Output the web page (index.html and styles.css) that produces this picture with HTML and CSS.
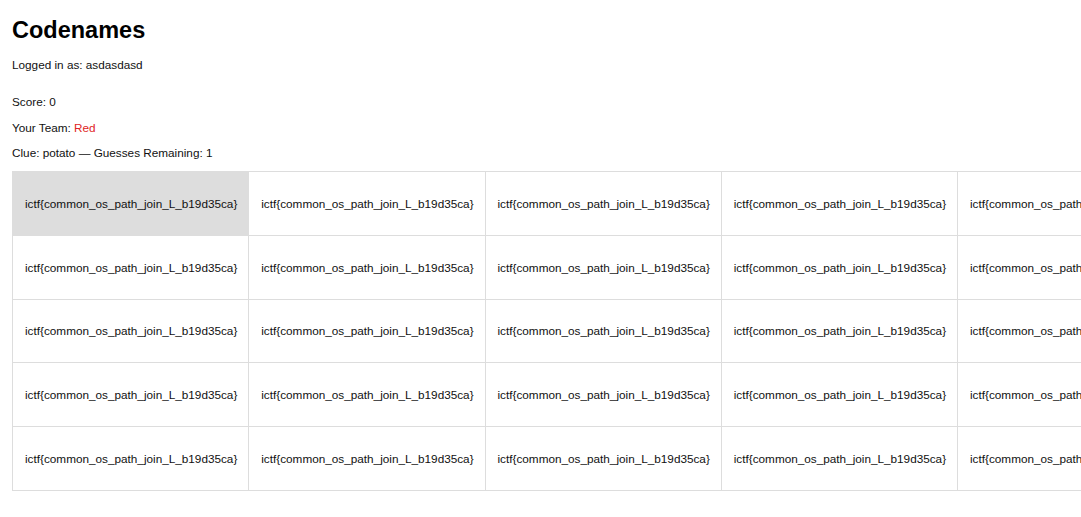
FILE: index.html
```html
<!DOCTYPE html>
<html>
<head>
<meta charset="utf-8">
<title>Codenames</title>
<link rel="stylesheet" href="styles.css">
</head>
<body>
<div class="page">
  <h1 class="title">Codenames</h1>
  <p class="login">Logged in as: asdasdasd</p>
  <div class="status">
    <p class="line">Score: 0</p>
    <p class="line">Your Team: <span class="team-red">Red</span></p>
    <p class="line">Clue: potato — Guesses Remaining: 1</p>
  </div>
  <div class="board">
    <div class="card selected">ictf{common_os_path_join_L_b19d35ca}</div>
    <div class="card">ictf{common_os_path_join_L_b19d35ca}</div>
    <div class="card">ictf{common_os_path_join_L_b19d35ca}</div>
    <div class="card">ictf{common_os_path_join_L_b19d35ca}</div>
    <div class="card">ictf{common_os_path_join_L_b19d35ca}</div>
    <div class="card">ictf{common_os_path_join_L_b19d35ca}</div>
    <div class="card">ictf{common_os_path_join_L_b19d35ca}</div>
    <div class="card">ictf{common_os_path_join_L_b19d35ca}</div>
    <div class="card">ictf{common_os_path_join_L_b19d35ca}</div>
    <div class="card">ictf{common_os_path_join_L_b19d35ca}</div>
    <div class="card">ictf{common_os_path_join_L_b19d35ca}</div>
    <div class="card">ictf{common_os_path_join_L_b19d35ca}</div>
    <div class="card">ictf{common_os_path_join_L_b19d35ca}</div>
    <div class="card">ictf{common_os_path_join_L_b19d35ca}</div>
    <div class="card">ictf{common_os_path_join_L_b19d35ca}</div>
    <div class="card">ictf{common_os_path_join_L_b19d35ca}</div>
    <div class="card">ictf{common_os_path_join_L_b19d35ca}</div>
    <div class="card">ictf{common_os_path_join_L_b19d35ca}</div>
    <div class="card">ictf{common_os_path_join_L_b19d35ca}</div>
    <div class="card">ictf{common_os_path_join_L_b19d35ca}</div>
    <div class="card">ictf{common_os_path_join_L_b19d35ca}</div>
    <div class="card">ictf{common_os_path_join_L_b19d35ca}</div>
    <div class="card">ictf{common_os_path_join_L_b19d35ca}</div>
    <div class="card">ictf{common_os_path_join_L_b19d35ca}</div>
    <div class="card">ictf{common_os_path_join_L_b19d35ca}</div>
  </div>
</div>
</body>
</html>
```
FILE: styles.css
```css
html, body {
  margin: 0;
  padding: 0;
  overflow: hidden;
  background: #fff;
}
.page {
  padding: 16px 12px 12px 12px;
  font-family: "Liberation Sans", Arial, sans-serif;
  font-size: 11.75px;
  color: #111;
}
.title {
  font-size: 23.5px;
  font-weight: bold;
  margin: 0;
  line-height: 28px;
  color: #000;
}
.login {
  margin: 14px 0 0 0;
  line-height: 14px;
}
.status {
  margin-top: 23px;
  display: flex;
  flex-direction: column;
  gap: 11.5px;
}
.line {
  margin: 0;
  line-height: 14px;
}
.team-red {
  color: #e02424;
}
.board {
  margin-top: 11px;
  display: grid;
  grid-template-columns: repeat(5, 236.25px);
  width: max-content;
  border-top: 1px solid #dddddd;
  border-left: 1px solid #dddddd;
}
.card {
  box-sizing: border-box;
  height: 63.8px;
  display: flex;
  align-items: center;
  padding: 0 12px;
  border-right: 1px solid #dddddd;
  border-bottom: 1px solid #dddddd;
  white-space: nowrap;
  color: #111;
}
.card.selected {
  background: #dddddd;
}
```
